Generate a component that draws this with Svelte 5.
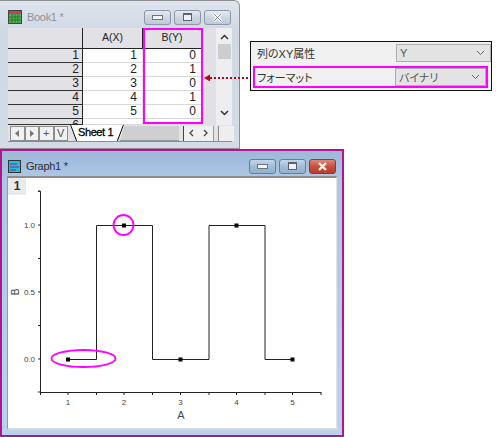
<script>
	const rows = [
		[1, 1, 0],
		[2, 2, 1],
		[3, 3, 0],
		[4, 4, 1],
		[5, 5, 0]
	];
	const markers = [[68, 359], [124, 225], [180.5, 359], [236.5, 225], [292.5, 359]];
	const x_labels = [[68, "1"], [124, "2"], [180.5, "3"], [236.5, "4"], [292.5, "5"]];
	const x_ticks = [40.5, 68, 96.5, 124, 152.5, 180.5, 209, 236.5, 265, 292.5, 321];
	const y_ticks = [191, 225, 258.5, 292, 325.5, 359, 392];
	const y_labels = [[225, "1.0"], [292, "0.5"], [359, "0.0"]];
</script>

<style>
:global(body) {
	margin: 0;
	background: #fff;
}
.canvas {
	position: relative;
	width: 500px;
	height: 437px;
	overflow: hidden;
	font-family: "Liberation Sans", "Noto Sans CJK JP", sans-serif;
	color: #222;
}
.window {
	position: absolute;
	box-sizing: border-box;
	display: flex;
	flex-direction: column;
}
.book {
	left: 0;
	top: 0;
	width: 240px;
	height: 149px;
	padding: 0 7px 7px 8px;
	background: linear-gradient(#dfe5ed, #cfd8e4 30px, #d3dbe6);
	border: 1px solid #8f8f95;
	border-left: 0;
	border-top-right-radius: 6px;
}
.graph {
	left: 0;
	top: 149px;
	width: 344px;
	height: 288px;
	padding: 0 5px 5px 5px;
	background: linear-gradient(#9db9d8, #aec8e4 30px, #b9d2ec);
	border: 2px solid #b5128f;
}
.titlebar {
	box-sizing: border-box;
	display: flex;
	align-items: center;
	gap: 5px;
	height: 27px;
	padding: 5px 1px 0 0;
	flex: none;
	font-size: 11px;
	letter-spacing: -0.3px;
}
.book .title {
	color: #8d929a;
}
.graph .titlebar {
	height: 25px;
	padding: 5px 1px 0 1px;
}
.graph .title {
	color: #2b3038;
}
.icons {
	margin-left: auto;
	display: flex;
	gap: 3px;
}
.winbtn {
	box-sizing: border-box;
	width: 27px;
	height: 15px;
	border: 1px solid #8b98a8;
	border-radius: 3px;
	background: linear-gradient(#e6ebf2, #cdd5df 50%, #c0cad6);
	display: flex;
	align-items: center;
	justify-content: center;
}
.graph .winbtn {
	background: linear-gradient(#c3d6ea, #a2bcd8 50%, #93b0d0);
	border-color: #5f7fa3;
}
.graph .winbtn.close {
	background: linear-gradient(#de8a78, #c8503e 50%, #b83c2c);
	border-color: #8e3a30;
}
.min {
	width: 9px;
	height: 3px;
	background: #f2f4f7;
	border: 1px solid #6c7480;
}
.max {
	width: 7px;
	height: 5px;
	border: 1px solid #5a626e;
	border-top-width: 2px;
	background: #eef1f5;
}
.sheet {
	flex: 1;
	display: flex;
	flex-direction: column;
	min-height: 0;
	background: #e0e0e6;
}
.table-area {
	position: relative;
	display: flex;
	height: 97px;
	flex: none;
	overflow: hidden;
}
.table {
	display: grid;
	grid-template-columns: 75px 60px 59px;
	grid-template-rows: 21px;
	grid-auto-rows: 14px;
	width: 194px;
	font-size: 12px;
}
.cell, .head {
	box-sizing: border-box;
	height: 14px;
	line-height: 13px;
	padding-right: 5px;
	text-align: right;
	background: #fff;
	border-bottom: 1px solid #d8d8d8;
	border-right: 1px solid #e2e2e2;
}
.head {
	height: 21px;
	line-height: 19px;
	text-align: center;
	padding: 0;
	font-size: 10.5px;
	background: #e2e1e6;
	border-bottom: 1px solid #222;
	border-right: 1px solid #222;
}
.rowhead {
	padding-right: 3px;
	background: #e2e1e6;
	border-bottom: 1px solid #333;
	border-right: 1px solid #222;
}
.stub {
	height: 6px;
	line-height: 13px;
	overflow: hidden;
}
.spacer {
	width: 14px;
	background: #e0e0e6;
}
.vscroll {
	width: 16px;
	background: #eeeef0;
	display: flex;
	flex-direction: column;
	align-items: center;
	padding: 6px 0 0 0;
	box-sizing: border-box;
}
.thumb {
	width: 13px;
	height: 15px;
	margin-top: 4px;
	background: #cdcdcd;
}
.arrow-bottom {
	margin-top: auto;
	margin-bottom: 9px;
}
.highlight-col {
	position: absolute;
	left: 135px;
	top: 0;
	width: 60px;
	height: 96px;
	box-sizing: border-box;
	border: 2px solid #f0f;
}
.tabbar {
	flex: 1;
	display: flex;
	align-items: center;
	padding-left: 2px;
	background: #e3e3e6;
	font-size: 12px;
	box-sizing: border-box;
	border-bottom: 1px solid #8c8c8c;
}
.navs {
	display: flex;
}
.nav {
	box-sizing: border-box;
	width: 14.5px;
	height: 15px;
	border: 1px solid #8c8c8c;
	background: #f1f1f1;
	font-size: 11px;
	line-height: 12px;
	text-align: center;
	color: #555;
	display: flex;
	align-items: center;
	justify-content: center;
}
.tab {
	position: relative;
	flex: none;
	height: 16px;
	width: 54px;
	margin-left: 2px;
	background: #fff;
	font-size: 11px;
	line-height: 15px;
	letter-spacing: -0.4px;
	padding-left: 8px;
	white-space: nowrap;
	-webkit-text-stroke: 0.3px #000;
	color: #000;
	box-sizing: border-box;
	clip-path: polygon(0 0, 100% 0, 89% 100%, 11% 100%);
}
.tab svg {
	position: absolute;
	left: 0;
	top: 0;
}
.tab-empty {
	flex: none;
	height: 15px;
	width: 59px;
	margin-left: -4px;
	background: #cfcfd2;
	border-bottom: 1px solid #555;
	box-sizing: border-box;
	clip-path: polygon(7% 0, 100% 0, 100% 100%, 0 100%);
}
.hnav {
	flex: none;
	display: flex;
	margin-left: 4px;
	padding: 0 4px;
	height: 15px;
	width: 31px;
	box-sizing: border-box;
	align-items: center;
	justify-content: space-between;
	border-left: 1px solid #444;
	border-right: 1px solid #999;
	background: #f0f0f0;
}
.grip {
	flex: none;
	margin-left: 4px;
	width: 16px;
	height: 15px;
	background: #eeeeee;
	border-left: 1px solid #888;
	box-sizing: border-box;
}
.plot {
	flex: 1;
	min-height: 0;
	background: #fff;
	border-top: 2px solid #8d8d8d;
	border-left: 1px solid #9a9a9a;
	border-bottom: 2px solid #d8d8d8;
	border-right: 1px solid #e4e4e4;
	position: relative;
}
.layer {
	position: absolute;
	left: 0;
	top: 0;
	width: 18px;
	height: 17px;
	background: #eaeaea;
	font-size: 12px;
	font-weight: 700;
	text-align: center;
	line-height: 17px;
	color: #333;
	z-index: 1;
}
.overlay {
	position: absolute;
	left: 0;
	top: 0;
	pointer-events: none;
}
.overlay text {
	font-family: "Liberation Sans", sans-serif;
	fill: #444;
}
.callout {
	position: absolute;
	left: 250px;
	top: 41px;
	width: 242px;
	height: 50px;
	box-sizing: border-box;
	border: 1px solid #111;
	background: #f0f0f0;
	padding: 2px 0 1px 2px;
	display: flex;
	flex-direction: column;
	gap: 4px;
	font-size: 11px;
	font-feature-settings: "palt";
}
.prop {
	display: flex;
	align-items: center;
	justify-content: space-between;
	height: 18px;
	padding-left: 4px;
	color: #333;
}
.prop.marked {
	height: 22px;
	box-sizing: border-box;
	border: 2px solid #f0f;
	padding-left: 2px;
	margin-right: 3px;
}
.select {
	box-sizing: border-box;
	width: 95px;
	height: 18px;
	background: #e3e3e3;
	border: 1px solid #adadad;
	padding: 0 5px 0 3px;
	display: flex;
	align-items: center;
	justify-content: space-between;
	color: #555;
}
.marked .select {
	width: 91px;
}
</style>

<div class="canvas">
	<div class="window book">
		<div class="titlebar">
			<svg width="14" height="14" viewBox="0 0 14 14">
				<rect x="0.5" y="0.5" width="13" height="13" fill="#4caf50" stroke="#444" />
				<rect x="1" y="1" width="12" height="3" fill="#c9396b" />
				<path d="M1 7h12M1 10h12M4 4v9M7 4v9M10 4v9" stroke="#1b5e20" stroke-width="0.6" />
			</svg>
			<span class="title">Book1 *</span>
			<div class="icons">
				<div class="winbtn"><div class="min"></div></div>
				<div class="winbtn"><div class="max"></div></div>
				<div class="winbtn">
					<svg width="11" height="9" viewBox="0 0 11 9"><path d="M2 1l7 7M9 1l-7 7" stroke="#fff" stroke-width="3" /><path d="M2 1l7 7M9 1l-7 7" stroke="#8a929c" stroke-width="1" /></svg>
				</div>
			</div>
		</div>
		<div class="sheet">
			<div class="table-area">
				<div class="table">
					<div class="head"></div>
					<div class="head">A(X)</div>
					<div class="head">B(Y)</div>
					{#each rows as r}
						<div class="cell rowhead">{r[0]}</div>
						<div class="cell">{r[1]}</div>
						<div class="cell">{r[2]}</div>
					{/each}
					<div class="cell rowhead stub">6</div>
					<div class="cell stub"></div>
					<div class="cell stub"></div>
				</div>
				<div class="highlight-col"></div>
				<div class="spacer"></div>
				<div class="vscroll">
					<svg width="9" height="6" viewBox="0 0 9 6"><path d="M1 5l3.5-3.5L8 5" fill="none" stroke="#333" stroke-width="1.5" /></svg>
					<div class="thumb"></div>
					<svg class="arrow-bottom" width="9" height="6" viewBox="0 0 9 6"><path d="M1 1l3.5 3.5L8 1" fill="none" stroke="#333" stroke-width="1.5" /></svg>
				</div>
			</div>
			<div class="tabbar">
				<div class="navs">
					<div class="nav"><svg width="6" height="7" viewBox="0 0 6 7"><path d="M5 0v7L1 3.5z" fill="#777" /></svg></div>
					<div class="nav"><svg width="6" height="7" viewBox="0 0 6 7"><path d="M1 0v7l4-3.5z" fill="#777" /></svg></div>
					<div class="nav">+</div>
					<div class="nav">V</div>
				</div>
				<div class="tab">
					<svg width="54" height="16" viewBox="0 0 54 16"><path d="M0.5 0L6.5 16M53.5 0L47.5 16" stroke="#111" stroke-width="1.2" fill="none" /></svg>
					Sheet 1
				</div>
				<div class="tab-empty"></div>
				<div class="hnav">
					<svg width="6" height="8" viewBox="0 0 6 8"><path d="M5 1L2 4l3 3" fill="none" stroke="#444" stroke-width="1.3" /></svg>
					<svg width="6" height="8" viewBox="0 0 6 8"><path d="M1 1l3 3-3 3" fill="none" stroke="#444" stroke-width="1.3" /></svg>
				</div>
				<div class="grip"></div>
			</div>
		</div>
	</div>

	<div class="window graph">
		<div class="titlebar">
			<svg width="13" height="13" viewBox="0 0 13 13">
				<rect x="0.5" y="0.5" width="12" height="12" fill="#1ec0d8" stroke="#333" />
				<path d="M2 4h7M2 7h9M2 10h6" stroke="#7a2a90" stroke-width="1.2" />
			</svg>
			<span class="title">Graph1 *</span>
			<div class="icons">
				<div class="winbtn"><div class="min"></div></div>
				<div class="winbtn"><div class="max"></div></div>
				<div class="winbtn close">
					<svg width="11" height="9" viewBox="0 0 11 9"><path d="M2 1l7 7M9 1l-7 7" stroke="#f4f4f4" stroke-width="2.4" /></svg>
				</div>
			</div>
		</div>
		<div class="plot">
			<div class="layer">1</div>
		</div>
	</div>

	<svg class="overlay" width="500" height="437" viewBox="0 0 500 437">
		<g stroke="#222" stroke-width="1" fill="none">
			<path d="M38 191.5h2.5V392.5H321" />
			{#each x_ticks as t}
				<path d="M{t} 392v3" />
			{/each}
			{#each y_ticks as t}
				<path d="M38 {t}h2.5" />
			{/each}
			<path d="M68 359.5H96.5V225.5H152.5V359.5H209V225.5H265V359.5H292.5" />
		</g>
		{#each markers as m}
			<rect x={m[0] - 2} y={m[1] - 1.5} width="4" height="4" fill="#000" />
		{/each}
		{#each x_labels as l}
			<text x={l[0]} y="405" font-size="8" text-anchor="middle">{l[1]}</text>
		{/each}
		{#each y_labels as l}
			<text x="35" y={l[0] + 3} font-size="8" text-anchor="end">{l[1]}</text>
		{/each}
		<text x="181" y="419" font-size="11" text-anchor="middle">A</text>
		<text x="19" y="292" font-size="10" text-anchor="middle" transform="rotate(-90 19 292)">B</text>
		<ellipse cx="83.5" cy="358.5" rx="32" ry="8.5" fill="none" stroke="#f0f" stroke-width="1.8" />
		<circle cx="123.5" cy="225" r="10" fill="none" stroke="#f0f" stroke-width="1.8" />
		<path d="M210 78H250" stroke="#c00020" stroke-width="2" stroke-dasharray="2 2" />
		<path d="M204 78l6-3.5v7z" fill="#c00020" />
	</svg>

	<div class="callout">
		<div class="prop">
			<span>列のXY属性</span>
			<div class="select">
				<span>Y</span>
				<svg width="9" height="6" viewBox="0 0 9 6"><path d="M1 1l3.5 3.5L8 1" fill="none" stroke="#666" stroke-width="1" /></svg>
			</div>
		</div>
		<div class="prop marked">
			<span>フォーマット</span>
			<div class="select">
				<span>バイナリ</span>
				<svg width="9" height="6" viewBox="0 0 9 6"><path d="M1 1l3.5 3.5L8 1" fill="none" stroke="#666" stroke-width="1" /></svg>
			</div>
		</div>
	</div>
</div>
